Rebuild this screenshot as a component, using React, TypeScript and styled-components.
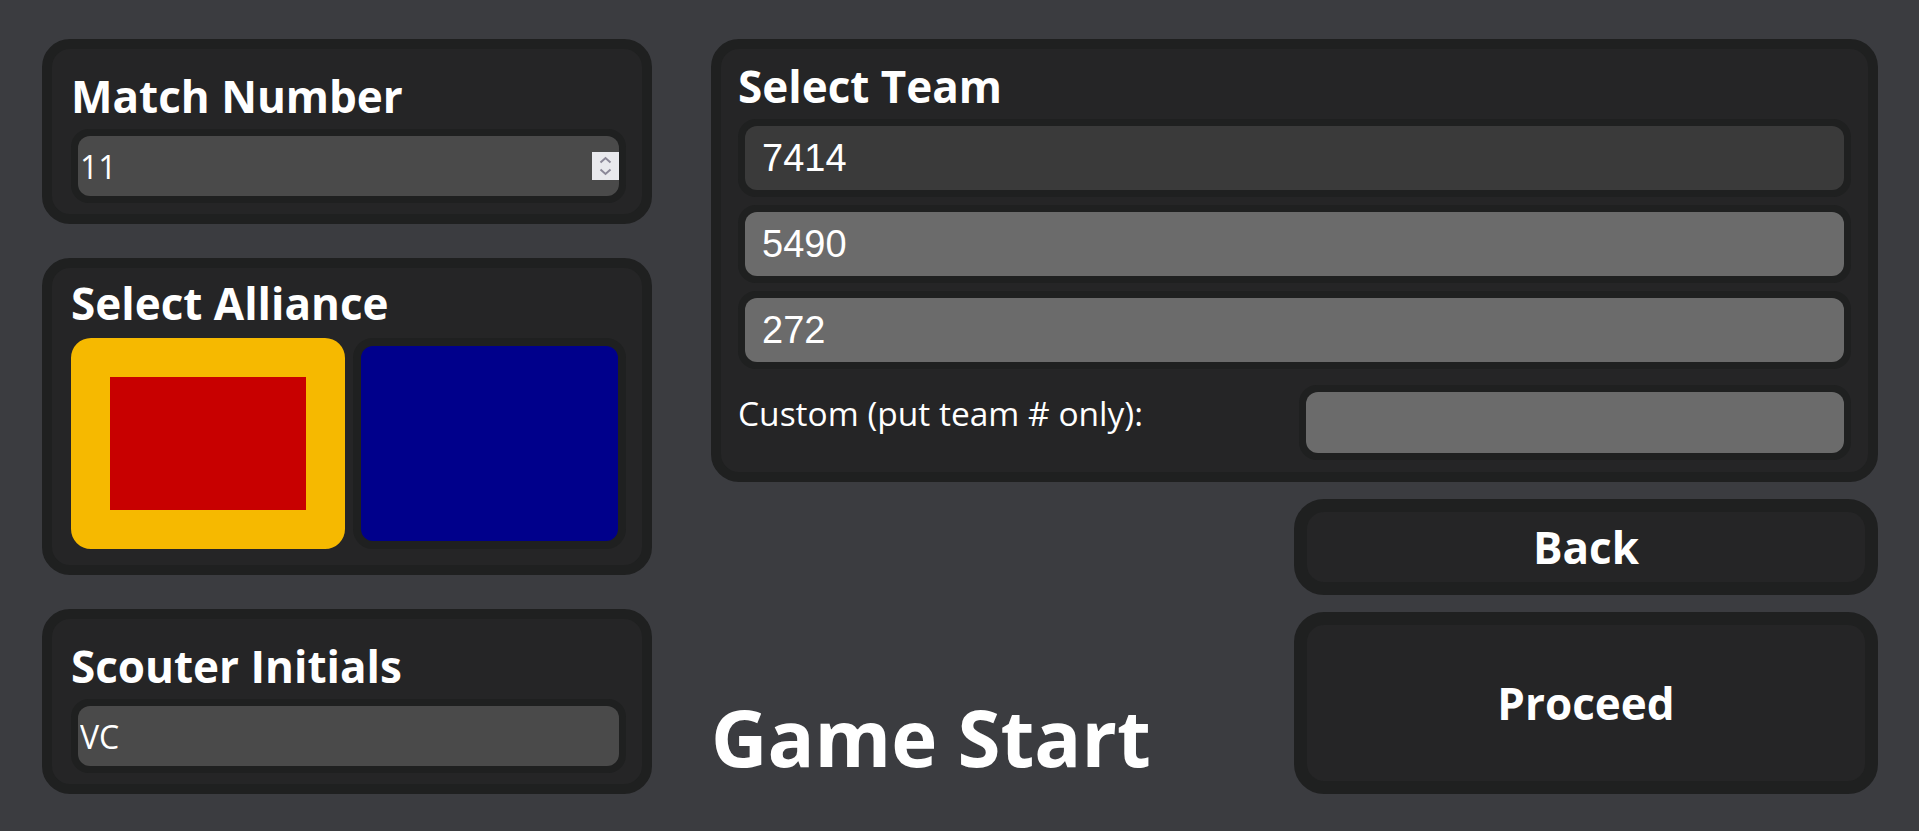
import React, { useState } from "react";
import styled, { createGlobalStyle } from "styled-components";

const GlobalStyle = createGlobalStyle`
  html, body {
    margin: 0;
    padding: 0;
    background-color: #3b3c40;
    font-family: "Open Sans", "Noto Sans", sans-serif;
    color: #fff;
  }
  * {
    box-sizing: border-box;
  }
`;

const Page = styled.div`
  display: grid;
  grid-template-columns: 610px 1fr;
  column-gap: 59px;
  height: 100vh;
  padding: 39px 41px 37px 42px;
`;

const LeftColumn = styled.div`
  display: flex;
  flex-direction: column;
  gap: 34px;
`;

const RightColumn = styled.div`
  display: flex;
  flex-direction: column;
  gap: 17px;
`;

const Card = styled.div<{ $top?: number; $bottom?: number }>`
  background-color: #252526;
  border: 10px solid #1f2020;
  border-radius: 28px;
  padding: ${(p) => p.$top ?? 17}px 16px ${(p) => p.$bottom ?? 11}px 19px;
`;

const SectionTitle = styled.h2`
  margin: 0 0 3px 0;
  font-size: 44px;
  font-weight: 700;
  line-height: 60px;
  color: #fff;
`;

const InputRing = styled.div`
  position: relative;
  border: 7px solid #1f2020;
  border-radius: 18px;
  background-color: #1f2020;
`;

const TextInput = styled.input`
  display: block;
  width: 100%;
  height: 60px;
  border: none;
  outline: none;
  border-radius: 12px;
  background-color: #4a4a4a;
  color: #fff;
  font-family: "Open Sans", "Noto Sans", sans-serif;
  font-size: 32px;
  padding: 0 2px;

  &::-webkit-inner-spin-button,
  &::-webkit-outer-spin-button {
    -webkit-appearance: none;
    margin: 0;
  }
  -moz-appearance: textfield;
`;

const Spinner = styled.div`
  position: absolute;
  right: 0;
  top: 50%;
  transform: translateY(-50%);
  width: 27px;
  height: 28px;
  background-color: #e9e9ed;
  display: flex;
  align-items: center;
  justify-content: center;
`;

const AllianceGrid = styled.div`
  display: grid;
  grid-template-columns: 1fr 1fr;
  gap: 8px;
  margin-top: 5px;
`;

const AllianceButton = styled.button<{ $color: string; $selected: boolean }>`
  height: 211px;
  background-color: ${(p) => p.$color};
  border: ${(p) => (p.$selected ? "39px solid #f6b900" : "8px solid #1f2020")};
  border-radius: 20px;
  cursor: pointer;
  padding: 0;
`;

const TeamPanel = styled.div`
  background-color: #252526;
  border: 10px solid #1f2020;
  border-radius: 28px;
  padding: 7px 17px 12px 17px;
  display: flex;
  flex-direction: column;
`;

const TeamList = styled.div`
  display: flex;
  flex-direction: column;
  gap: 8px;
  margin-top: 0;
`;

const TeamRing = styled.div`
  border: 7px solid #1f2020;
  border-radius: 18px;
  background-color: #1f2020;
`;

const TeamButton = styled.button<{ $selected: boolean }>`
  display: flex;
  align-items: center;
  width: 100%;
  height: 64px;
  border: none;
  border-radius: 12px;
  background-color: ${(p) => (p.$selected ? "#3a3a3a" : "#6b6b6b")};
  color: #fff;
  font-family: "Liberation Sans", Arial, sans-serif;
  font-size: 38px;
  padding: 0 17px;
  text-align: left;
  cursor: pointer;
`;

const CustomRow = styled.div`
  display: grid;
  grid-template-columns: 1fr 1fr;
  gap: 8px;
  align-items: start;
  margin-top: 16px;
`;

const CustomLabel = styled.label`
  font-size: 33.5px;
  padding-top: 5px;
  color: #fff;
`;

const CustomInput = styled.input`
  display: block;
  width: 100%;
  height: 61px;
  border: none;
  outline: none;
  border-radius: 12px;
  background-color: #6b6b6b;
  color: #fff;
  font-family: "Liberation Sans", Arial, sans-serif;
  font-size: 32px;
  padding: 0 12px;
`;

const BottomArea = styled.div`
  flex: 1;
  display: grid;
  grid-template-columns: 1fr 584px;
`;

const PageTitle = styled.h1`
  align-self: end;
  margin: 0 0 4px 0;
  font-size: 78px;
  font-weight: 700;
  line-height: 1.362;
  color: #fff;
`;

const ActionColumn = styled.div`
  display: flex;
  flex-direction: column;
  gap: 17px;
`;

const ActionButton = styled.button<{ $grow?: boolean }>`
  height: ${(p) => (p.$grow ? "auto" : "96px")};
  flex: ${(p) => (p.$grow ? 1 : "none")};
  background-color: #252526;
  border: 13px solid #1f2020;
  border-radius: 30px;
  color: #fff;
  font-family: "Open Sans", "Noto Sans", sans-serif;
  font-size: 44px;
  font-weight: 700;
  cursor: pointer;
`;

const teams = ["7414", "5490", "272"];

const GameStart = () => {
  const [match, setMatch] = useState("11");
  const [alliance, setAlliance] = useState<"red" | "blue">("red");
  const [team, setTeam] = useState("7414");
  const [custom, setCustom] = useState("");
  const [initials, setInitials] = useState("VC");

  return (
    <Page>
      <GlobalStyle />
      <LeftColumn>
        <Card>
          <SectionTitle>Match Number</SectionTitle>
          <InputRing>
            <TextInput
              type="number"
              value={match}
              onChange={(e) => setMatch(e.target.value)}
            />
            <Spinner>
              <svg width="27" height="28" viewBox="0 0 27 28" fill="none">
                <path d="M8.5 10.5 L13.5 6 L18.5 10.5" stroke="#8b8898" strokeWidth="2" />
                <path d="M8.5 17.5 L13.5 22 L18.5 17.5" stroke="#8b8898" strokeWidth="2" />
              </svg>
            </Spinner>
          </InputRing>
        </Card>

        <Card $top={5} $bottom={16}>
          <SectionTitle>Select Alliance</SectionTitle>
          <AllianceGrid>
            <AllianceButton
              $color="#c80000"
              $selected={alliance === "red"}
              onClick={() => setAlliance("red")}
            />
            <AllianceButton
              $color="#00008b"
              $selected={alliance === "blue"}
              onClick={() => setAlliance("blue")}
            />
          </AllianceGrid>
        </Card>

        <Card>
          <SectionTitle>Scouter Initials</SectionTitle>
          <InputRing>
            <TextInput
              type="text"
              value={initials}
              onChange={(e) => setInitials(e.target.value)}
            />
          </InputRing>
        </Card>
      </LeftColumn>

      <RightColumn>
        <TeamPanel>
          <SectionTitle>Select Team</SectionTitle>
          <TeamList>
            {teams.map((t) => (
              <TeamRing key={t}>
                <TeamButton $selected={team === t} onClick={() => setTeam(t)}>
                  {t}
                </TeamButton>
              </TeamRing>
            ))}
          </TeamList>
          <CustomRow>
            <CustomLabel>Custom (put team # only):</CustomLabel>
            <TeamRing>
              <CustomInput
                type="text"
                value={custom}
                onChange={(e) => setCustom(e.target.value)}
              />
            </TeamRing>
          </CustomRow>
        </TeamPanel>

        <BottomArea>
          <PageTitle>Game Start</PageTitle>
          <ActionColumn>
            <ActionButton>Back</ActionButton>
            <ActionButton $grow>Proceed</ActionButton>
          </ActionColumn>
        </BottomArea>
      </RightColumn>
    </Page>
  );
};

export default GameStart;
